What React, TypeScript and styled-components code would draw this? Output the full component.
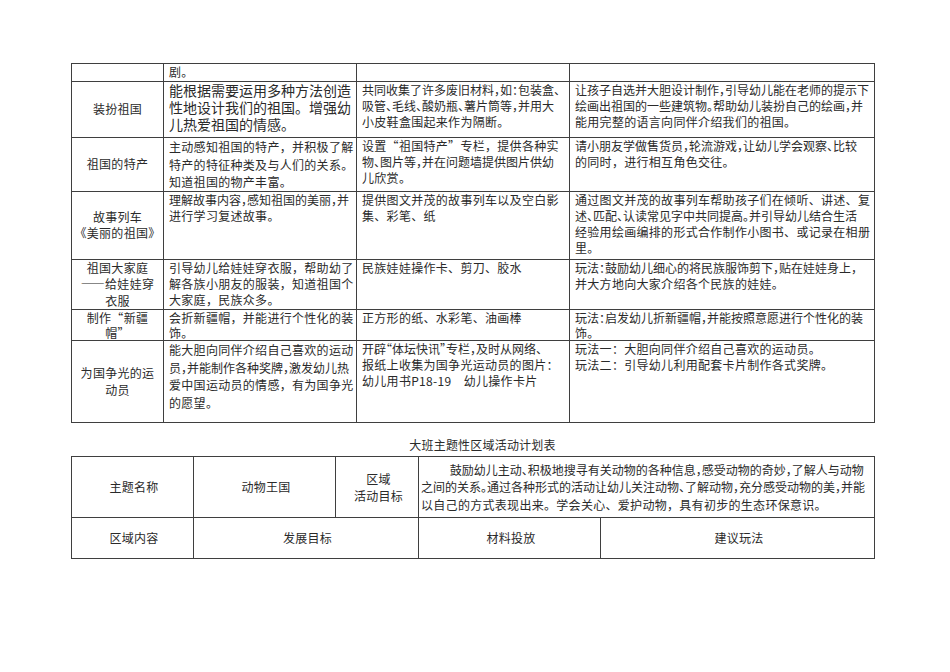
import React from "react";
import styled, { createGlobalStyle, css } from "styled-components";

type Line = string | { s: string; tight: true };

interface PlanRow {
  h: number;
  area: string[];
  areaLh?: number;
  goal: Line[];
  goalSize?: number;
  goalLh?: number;
  material: Line[];
  play: Line[];
  playLh?: number;
}

const tight = (s: string): Line => ({ s, tight: true });

const GlobalStyle = createGlobalStyle`
  html, body {
    margin: 0;
    background: #ffffff;
  }
  body {
    font-family: "Noto Sans CJK SC", "Liberation Serif", sans-serif;
    color: #2a2a2a;
  }
`;

const Page = styled.div`
  width: 950px;
  height: 672px;
  box-sizing: border-box;
  padding: 63px 0 0 71px;
`;

const Sheet = styled.table`
  width: 803px;
  border-collapse: collapse;
  table-layout: fixed;
`;

const Row = styled.tr<{ $h: number }>`
  height: ${(props) => props.$h}px;
`;

const Text = styled.div<{ $tight?: boolean; $indent?: boolean }>`
  white-space: nowrap;
  letter-spacing: ${(props) => (props.$tight ? 0 : 0.3)}px;
  font-feature-settings: ${(props) => (props.$tight ? '"halt"' : "normal")};
  text-indent: ${(props) => (props.$indent ? "2.4em" : "0")};
`;

const Cell = styled.td<{ $center?: boolean; $size?: number; $lh?: number }>`
  border: 1px solid #3f3f3f;
  padding: 0 2px 0 5px;
  vertical-align: ${(props) => (props.$center ? "middle" : "top")};
  text-align: ${(props) => (props.$center ? "center" : "left")};
  font-size: ${(props) => props.$size ?? 12}px;
  line-height: ${(props) => props.$lh ?? 16}px;
  overflow: hidden;
  ${(props) =>
    props.$size === 14 &&
    css`
      ${Text} {
        letter-spacing: 0;
      }
    `}
`;

const NameCell = styled(Cell)`
  padding: 0 2px;
  ${Text} {
    font-feature-settings: "fwid";
  }
`;

const Para = styled(Cell)`
  padding: 0 2px;
  vertical-align: middle;
`;

const Title = styled.div`
  width: 803px;
  box-sizing: border-box;
  padding-left: 20px;
  margin: 14px 0 3px;
  text-align: center;
  font-size: 12px;
  line-height: 16px;
  letter-spacing: 0.2px;
`;

const rows: PlanRow[] = [
  {
    h: 18,
    area: [],
    goal: ["剧。"],
    material: [],
    play: [],
  },
  {
    h: 56,
    area: ["装扮祖国"],
    goal: ["能根据需要运用多种方法创造", "性地设计我们的祖国。增强幼", "儿热爱祖国的情感。"],
    goalSize: 14,
    goalLh: 17,
    material: [
      tight("共同收集了许多废旧材料，如：包装盒、"),
      tight("吸管、毛线、酸奶瓶、薯片筒等，并用大"),
      "小皮鞋盒围起来作为隔断。",
    ],
    play: [
      tight("让孩子自选并大胆设计制作，引导幼儿能在老师的提示下"),
      tight("绘画出祖国的一些建筑物。帮助幼儿装扮自己的绘画，并"),
      "能用完整的语言向同伴介绍我们的祖国。",
    ],
  },
  {
    h: 53,
    area: ["祖国的特产"],
    goal: ["主动感知祖国的特产，并积极了解", "特产的特征种类及与人们的关系。", "知道祖国的物产丰富。"],
    goalLh: 17.5,
    material: ["设置“祖国特产”专栏，提供各种实", tight("物、图片等，并在问题墙提供图片供幼"), "儿欣赏。"],
    play: [tight("请小朋友学做售货员，轮流游戏，让幼儿学会观察、比较"), "的同时，进行相互角色交往。"],
  },
  {
    h: 68,
    area: ["故事列车", "《美丽的祖国》"],
    goal: [tight("理解故事内容，感知祖国的美丽，并"), "进行学习复述故事。"],
    material: ["提供图文并茂的故事列车以及空白影", "集、彩笔、纸"],
    play: [
      "通过图文并茂的故事列车帮助孩子们在倾听、讲述、复",
      tight("述、匹配、认读常见字中共同提高。并引导幼儿结合生活"),
      "经验用绘画编排的形式合作制作小图书、或记录在相册",
      "里。",
    ],
  },
  {
    h: 50,
    area: ["祖国大家庭", "——给娃娃穿", "衣服"],
    goal: ["引导幼儿给娃娃穿衣服，帮助幼了", "解各族小朋友的服装，知道祖国个", "大家庭，民族众多。"],
    material: ["民族娃娃操作卡、剪刀、胶水"],
    play: [tight("玩法：鼓励幼儿细心的将民族服饰剪下，贴在娃娃身上，"), "并大方地向大家介绍各个民族的娃娃。"],
  },
  {
    h: 29,
    area: ["制作“新疆", "帽”"],
    areaLh: 15,
    goal: ["会折新疆帽，并能进行个性化的装", "饰。"],
    goalLh: 15,
    material: ["正方形的纸、水彩笔、油画棒"],
    play: [tight("玩法：启发幼儿折新疆帽，并能按照意愿进行个性化的装"), "饰。"],
    playLh: 15,
  },
  {
    h: 82,
    area: ["为国争光的运", "动员"],
    goal: [
      "能大胆向同伴介绍自己喜欢的运动",
      tight("员，并能制作各种奖牌，激发幼儿热"),
      "爱中国运动员的情感，有为国争光",
      "的愿望。",
    ],
    goalLh: 17.5,
    material: [tight("开辟“体坛快讯”专栏，及时从网络、"), "报纸上收集为国争光运动员的图片：", "幼儿用书P18-19　幼儿操作卡片"],
    play: ["玩法一：大胆向同伴介绍自己喜欢的运动员。", "玩法二：引导幼儿利用配套卡片制作各式奖牌。"],
  },
];

const Lines = ({ lines }: { lines: Line[] }) => (
  <>
    {lines.map((line, i) =>
      typeof line === "string" ? (
        <Text key={i}>{line}</Text>
      ) : (
        <Text key={i} $tight>
          {line.s}
        </Text>
      )
    )}
  </>
);

const App = () => {
  return (
    <Page>
      <GlobalStyle />
      <Sheet>
        <colgroup>
          <col style={{ width: 92 }} />
          <col style={{ width: 193 }} />
          <col style={{ width: 213 }} />
          <col style={{ width: 305 }} />
        </colgroup>
        <tbody>
          {rows.map((row, i) => (
            <Row key={i} $h={row.h}>
              <NameCell $center $lh={row.areaLh ?? 16.5}>
                <Lines lines={row.area} />
              </NameCell>
              <Cell $size={row.goalSize} $lh={row.goalLh}>
                <Lines lines={row.goal} />
              </Cell>
              <Cell $lh={row.playLh}>
                <Lines lines={row.material} />
              </Cell>
              <Cell $lh={row.playLh}>
                <Lines lines={row.play} />
              </Cell>
            </Row>
          ))}
        </tbody>
      </Sheet>

      <Title>大班主题性区域活动计划表</Title>

      <Sheet>
        <colgroup>
          <col style={{ width: 122 }} />
          <col style={{ width: 142 }} />
          <col style={{ width: 83 }} />
          <col style={{ width: 182 }} />
          <col style={{ width: 274 }} />
        </colgroup>
        <tbody>
          <Row $h={61}>
            <Cell $center>
              <Text>主题名称</Text>
            </Cell>
            <Cell $center>
              <Text>动物王国</Text>
            </Cell>
            <Cell $center $lh={17}>
              <Text>区域</Text>
              <Text>活动目标</Text>
            </Cell>
            <Para colSpan={2} $lh={17.5}>
              <Text $indent $tight>
                鼓励幼儿主动、积极地搜寻有关动物的各种信息，感受动物的奇妙，了解人与动物
              </Text>
              <Text $tight>之间的关系。通过各种形式的活动让幼儿关注动物、了解动物，充分感受动物的美，并能</Text>
              <Text>以自己的方式表现出来。学会关心、爱护动物，具有初步的生态环保意识。</Text>
            </Para>
          </Row>
          <Row $h={41}>
            <Cell $center>
              <Text>区域内容</Text>
            </Cell>
            <Cell $center colSpan={2}>
              <Text>发展目标</Text>
            </Cell>
            <Cell $center>
              <Text>材料投放</Text>
            </Cell>
            <Cell $center>
              <Text>建议玩法</Text>
            </Cell>
          </Row>
        </tbody>
      </Sheet>
    </Page>
  );
};

export default App;
